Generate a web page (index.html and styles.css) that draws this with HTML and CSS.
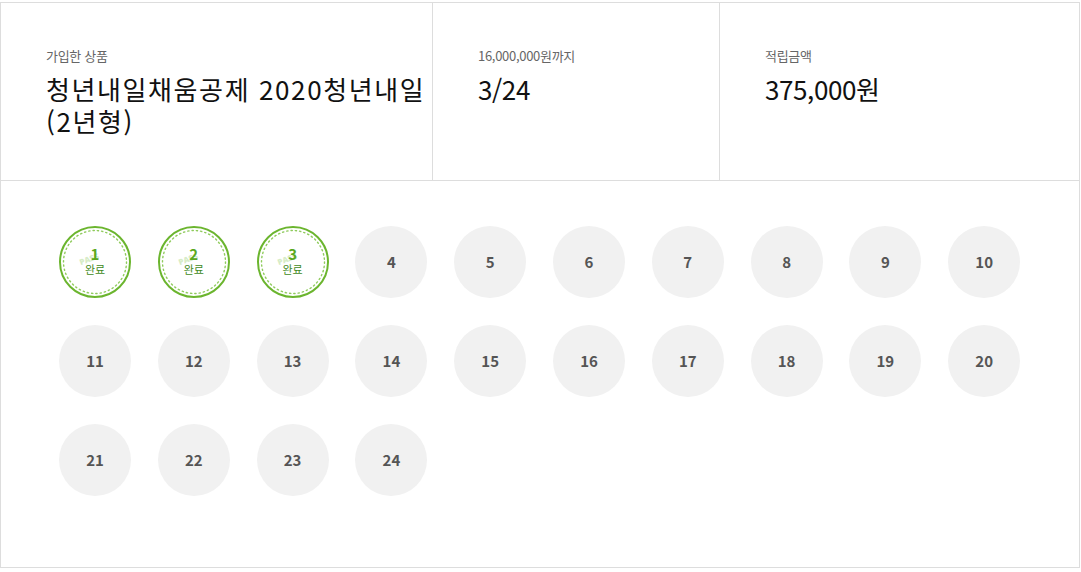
FILE: index.html
```html
<!DOCTYPE html>
<html lang="ko">
<head>
    <meta charset="UTF-8">
    <meta name="viewport" content="width=device-width, initial-scale=1.0">
    <title>납입 현황</title>
    <link rel="stylesheet" href="styles.css">
</head>
<body>
    <div class="savings">
        <!-- 상단 요약 -->
        <div class="summary">
            <div class="summary-item item-product">
                <div class="summary-label">가입한 상품</div>
                <div class="summary-value product-name">청년내일채움공제 2020청년내일(2년형)</div>
            </div>
            <div class="summary-item item-count">
                <div class="summary-label">16,000,000원까지</div>
                <div class="summary-value">3/24</div>
            </div>
            <div class="summary-item item-amount">
                <div class="summary-label">적립금액</div>
                <div class="summary-value">375,000원</div>
            </div>
        </div>

        <!-- 회차 목록 -->
        <div class="rounds" id="rounds"></div>
    </div>

    <script>
        // 회차 그리기
        const total = 24;
        const paid = 3;
        const rounds = document.getElementById('rounds');

        for (let i = 1; i <= total; i++) {
            const item = document.createElement('div');
            if (i <= paid) {
                item.className = 'round done';
                item.innerHTML =
                    '<svg class="round-dots" viewBox="0 0 72 72">' +
                    '<circle cx="36" cy="36" r="31.5" fill="none" stroke="#8fcb5c" stroke-width="1.4" stroke-dasharray="1.3 3" stroke-linecap="round"/>' +
                    '</svg>' +
                    '<span class="round-stamp">PASS</span>' +
                    '<span class="round-num">' + i + '</span>' +
                    '<span class="round-state">완료</span>';
            } else {
                item.className = 'round';
                item.innerHTML = '<span class="round-num">' + i + '</span>';
            }
            rounds.appendChild(item);
        }
    </script>
</body>
</html>
```

FILE: styles.css
```css
body {
    margin: 0;
    padding-top: 2px;
    font-family: "Noto Sans CJK KR", "Noto Sans", sans-serif;
    background-color: #ffffff;
    color: #111111;
}

.savings {
    width: 1080px;
    box-sizing: border-box;
    border: 1px solid #dddddd;
}

/* 상단 요약 */
.summary {
    display: flex;
    height: 177px;
    border-bottom: 1px solid #dddddd;
}

.summary-item {
    box-sizing: border-box;
    padding: 44px 8px 0 45px;
}

.item-product {
    width: 431px;
    padding-right: 4px;
}

.item-count {
    width: 287px;
    border-left: 1px solid #dddddd;
}

.item-amount {
    flex: 1;
    border-left: 1px solid #dddddd;
}

.summary-label {
    font-size: 13px;
    line-height: 18px;
    color: #666666;
    letter-spacing: -0.3px;
}

.summary-value {
    margin-top: 8px;
    font-size: 26px;
    line-height: 32px;
    color: #111111;
    letter-spacing: -0.4px;
}

.product-name {
    letter-spacing: 1.6px;
}

/* 회차 목록 */
.rounds {
    display: grid;
    grid-template-columns: repeat(10, 72px);
    column-gap: 26.8px;
    row-gap: 27px;
    padding: 45px 0 71px 58px;
}

.round {
    position: relative;
    width: 72px;
    height: 72px;
    box-sizing: border-box;
    border-radius: 50%;
    background-color: #f1f1f1;
    display: flex;
    flex-direction: column;
    justify-content: center;
    align-items: center;
}

.round-num {
    font-size: 15px;
    font-weight: 700;
    line-height: 18px;
    color: #555555;
}

.round.done {
    background-color: #ffffff;
    border: 2px solid #6bb52e;
}

.round.done .round-num {
    position: relative;
    color: #5aa820;
    line-height: 16px;
    margin-top: -2px;
}

.round-state {
    position: relative;
    font-size: 11px;
    line-height: 14px;
    color: #3f8a1c;
}

.round-dots {
    position: absolute;
    left: -2px;
    top: -2px;
    width: 72px;
    height: 72px;
}

/* PASS 도장 */
.round-stamp {
    position: absolute;
    left: 18px;
    top: 26px;
    transform: rotate(-20deg);
    font-family: "Open Sans", sans-serif;
    font-size: 8px;
    line-height: 10px;
    font-weight: 800;
    color: #d6ecc6;
}
```
